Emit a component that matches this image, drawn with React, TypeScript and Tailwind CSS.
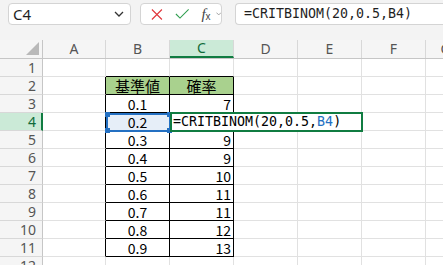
import React from 'react';

const cols = [
  { k: 'A', w: 63 },
  { k: 'B', w: 64 },
  { k: 'C', w: 64 },
  { k: 'D', w: 64 },
  { k: 'E', w: 64 },
  { k: 'F', w: 64 },
  { k: 'G', w: 40 },
];

const data: Record<number, [string, string]> = {
  2: ['基準値', '確率'],
  3: ['0.1', '7'],
  4: ['0.2', ''],
  5: ['0.3', '9'],
  6: ['0.4', '9'],
  7: ['0.5', '10'],
  8: ['0.6', '11'],
  9: ['0.7', '11'],
  10: ['0.8', '12'],
  11: ['0.9', '13'],
};

const rows = [1, 2, 3, 4, 5, 6, 7, 8, 9, 10, 11, 12];
const cellFont = { fontFamily: '"Noto Sans CJK JP", "Noto Sans", sans-serif' };
const uiFont = { fontFamily: '"Noto Sans", "Open Sans", sans-serif' };
const monoFont = { fontFamily: '"DejaVu Sans Mono", monospace' };

function Toolbar() {
  return (
    <div className="flex h-[40px] items-start bg-[#f3f3f3] pt-[3px]" style={uiFont}>
      <div className="ml-[8px] flex h-[22px] w-[123px] shrink-0 items-center justify-between rounded-[4px] border border-[#d4d4d4] bg-white pl-[4px] pr-[6px]">
        <span className="text-[15px] leading-none text-[#1f1f1f]">C4</span>
        <svg width="10" height="6" viewBox="0 0 10 6">
          <polyline points="1,1 5,5 9,1" fill="none" stroke="#333" strokeWidth="1.3" />
        </svg>
      </div>
      <div className="ml-[9px] flex h-[22px] w-[82px] shrink-0 items-center rounded-[4px] border border-[#d4d4d4] bg-white">
        <svg className="ml-[10px]" width="13" height="13" viewBox="0 0 13 13">
          <path d="M1 1 L12 12 M12 1 L1 12" stroke="#e0343a" strokeWidth="1.2" />
        </svg>
        <svg className="ml-[12px]" width="16" height="12" viewBox="0 0 16 12">
          <polyline points="1,6 5.5,10.5 15,1" fill="none" stroke="#2f9e4f" strokeWidth="1.2" />
        </svg>
        <span className="ml-[12px] flex items-end leading-none text-[#444]">
          <span className="text-[15px] italic" style={{ fontFamily: '"Liberation Serif", serif' }}>f</span>
          <span className="text-[10px]" style={{ fontFamily: '"Liberation Sans", sans-serif' }}>x</span>
        </span>
        <svg className="ml-[5px]" width="6" height="4" viewBox="0 0 6 4">
          <polyline points="0.5,0.5 3,3 5.5,0.5" fill="none" stroke="#999" strokeWidth="1" />
        </svg>
      </div>
      <div className="ml-[13px] flex h-[22px] w-[230px] shrink-0 items-center rounded-l-[4px] border border-r-0 border-[#d4d4d4] bg-white pl-[8px]">
        <span className="text-[13.3px] leading-none text-[#1f1f1f]" style={monoFont}>
          =CRITBINOM(20,0.5,B4)
        </span>
      </div>
    </div>
  );
}

function ColumnHeader() {
  return (
    <div className="flex h-[19px] border-b border-[#c6c6c6] bg-[#f5f5f5] text-[14px] text-[#555]" style={uiFont}>
      <div className="relative w-[43px] shrink-0 border-r border-[#c6c6c6]">
        <svg className="absolute right-[3px] bottom-[3px]" width="13" height="13" viewBox="0 0 13 13">
          <polygon points="13,0 13,13 0,13" fill="#b9b9b9" />
        </svg>
      </div>
      {cols.map((c) => (
        <div
          key={c.k}
          style={{ width: c.w }}
          className={
            c.k === 'C'
              ? 'flex shrink-0 items-center justify-center border-b-2 border-r border-b-[#107c41] border-r-[#d8d8d8] bg-[#cbead7] text-[#0f6b39]'
              : 'flex shrink-0 items-center justify-center border-r border-[#d8d8d8]'
          }
        >
          <span className="leading-none">{c.k}</span>
        </div>
      ))}
    </div>
  );
}

function Row({ n }: { n: number }) {
  const d = data[n];
  const inTable = n >= 2 && n <= 11;
  const active = n === 4;
  return (
    <div className="flex h-[18px]">
      <div
        className={
          active
            ? 'flex w-[43px] shrink-0 items-center justify-end border-b border-r-2 border-b-[#d8d8d8] border-r-[#107c41] bg-[#cbead7] pr-[5px] text-[#0f6b39]'
            : 'flex w-[43px] shrink-0 items-center justify-end border-b border-r border-b-[#d8d8d8] border-r-[#c6c6c6] bg-[#f5f5f5] pr-[6px] text-[#555]'
        }
        style={uiFont}
      >
        <span className="block text-[14px] leading-none">{n}</span>
      </div>
      {cols.map((c) => {
        let cls = 'flex shrink-0 items-center border-b border-r border-[#e1e1e1] text-[14px] leading-none text-black';
        if (c.k === 'A' && inTable) cls += ' border-r-black';
        if ((c.k === 'B' || c.k === 'C') && (inTable || n === 1)) cls += ' border-b-black';
        if ((c.k === 'B' || c.k === 'C') && inTable) cls += ' border-r-black';
        if (n === 2 && (c.k === 'B' || c.k === 'C')) cls += ' bg-[#a9d18e] justify-center';
        else if (c.k === 'B') cls += ' justify-center';
        else if (c.k === 'C') cls += ' justify-end pr-[2px]';
        if (active && c.k === 'B') cls += ' bg-[#e6eef8]';
        const text = c.k === 'B' ? d?.[0] : c.k === 'C' ? d?.[1] : '';
        return (
          <div key={c.k} style={{ width: c.w, ...cellFont }} className={cls}>
            {text ? <span className={n === 2 ? 'block text-[15px] leading-none' : 'block leading-none'}>{text}</span> : null}
          </div>
        );
      })}
    </div>
  );
}

export default function App() {
  return (
    <div className="relative h-[265px] w-[443px] overflow-hidden bg-white">
      <Toolbar />
      <ColumnHeader />
      <div>
        {rows.map((n) => (
          <Row key={n} n={n} />
        ))}
      </div>

      {/* reference highlight on B4 */}
      <div className="absolute left-[106px] top-[113px] h-[19px] w-[65px] border-2 border-[#2470c2]">
        <span className="absolute -left-[3px] -top-[3px] h-[5px] w-[5px] bg-[#2470c2]" />
        <span className="absolute -right-[3px] -top-[3px] h-[5px] w-[5px] bg-[#2470c2]" />
        <span className="absolute -left-[3px] -bottom-[3px] h-[5px] w-[5px] bg-[#2470c2]" />
        <span className="absolute -right-[3px] -bottom-[3px] h-[5px] w-[5px] bg-[#2470c2]" />
      </div>

      {/* editing cell C4 */}
      <div className="absolute left-[170px] top-[112px] flex h-[20px] w-[193px] items-center border-2 border-[#107c41] bg-white pl-[1px]">
        <span className="text-[13.3px] leading-none text-black" style={monoFont}>
          =CRITBINOM(20,0.5,<span className="text-[#2470c2]">B4</span>)
        </span>
      </div>
    </div>
  );
}
